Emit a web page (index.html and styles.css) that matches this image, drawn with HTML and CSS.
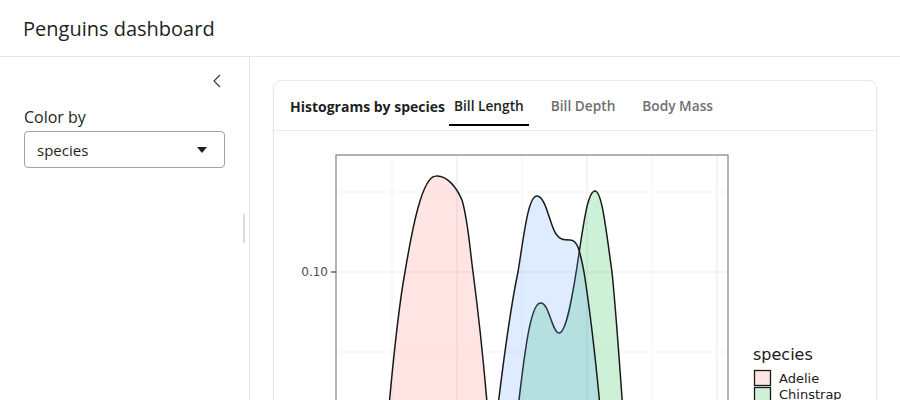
FILE: index.html
```html
<!DOCTYPE html>
<html lang="en">
<head>
    <meta charset="UTF-8">
    <meta name="viewport" content="width=device-width, initial-scale=1.0">
    <title>Penguins dashboard</title>
    <link rel="stylesheet" href="styles.css">
</head>
<body>
    <header class="page-header">
        <h1>Penguins dashboard</h1>
    </header>

    <div class="layout">
        <aside class="sidebar">
            <div class="sidebar-top">
                <button class="collapse-toggle" aria-label="Collapse sidebar">
                    <svg width="10" height="14" viewBox="0 0 10 14">
                        <path d="M8 1 L2 7 L8 13" fill="none" stroke="#333" stroke-width="1.1"/>
                    </svg>
                </button>
            </div>
            <label class="field-label" for="colorBy">Color by</label>
            <div class="select">
                <span>species</span>
                <span class="caret"></span>
            </div>
            <div class="resize-handle"></div>
        </aside>

        <main class="main">
            <section class="card">
                <div class="card-header">
                    <span class="card-title">Histograms by species</span>
                    <nav class="tabs">
                        <a class="tab active">Bill Length</a>
                        <a class="tab">Bill Depth</a>
                        <a class="tab">Body Mass</a>
                    </nav>
                </div>
                <div class="card-body">
                    <svg class="plot" width="570" height="300" viewBox="0 0 570 300">
                        <g transform="translate(-290 -147)">
                            <!-- grid -->
                            <g stroke="#f3f3f3" stroke-width="1">
                                <line x1="336" y1="192" x2="728" y2="192"/>
                                <line x1="336" y1="352" x2="728" y2="352"/>
                                <line x1="392" y1="155" x2="392" y2="460"/>
                                <line x1="522" y1="155" x2="522" y2="460"/>
                                <line x1="652" y1="155" x2="652" y2="460"/>
                            </g>
                            <g stroke="#ebebeb" stroke-width="1.2">
                                <line x1="336" y1="272" x2="728" y2="272"/>
                                <line x1="457" y1="155" x2="457" y2="460"/>
                                <line x1="587" y1="155" x2="587" y2="460"/>
                                <line x1="717" y1="155" x2="717" y2="460"/>
                            </g>

                            <!-- densities: Adelie, Chinstrap, Gentoo -->
                            <g stroke="#1a1a1a" stroke-width="1.5">
                                <path fill="#F8766D" fill-opacity="0.2"
                                      d="M386 440 C392 370, 398 310, 405 272 C412 230, 422 176, 436 176 C446 175, 456 186, 462 200 C468 220, 470 250, 473 272 C478 310, 484 360, 490 440"/>
                                <path fill="#00BA38" fill-opacity="0.2"
                                      d="M514 440 C522 380, 528 305, 540 303 C549 301, 552 333, 559 333 C566 333, 572 300, 578 260 C584 220, 588 191, 595 191 C602 191, 606 230, 612 272 C616 310, 620 370, 625 440"/>
                                <path fill="#619CFF" fill-opacity="0.2"
                                      d="M494 440 C502 370, 510 310, 518 272 C524 235, 528 196, 537 196 C546 196, 550 226, 556 234 C560 240, 564 240, 570 240 C578 240, 580 252, 584 272 C590 310, 597 370, 603 440"/>
                            </g>

                            <!-- panel border and y axis -->
                            <rect x="336" y="155" width="392" height="300" fill="none" stroke="#8c8c8c" stroke-width="1.3"/>
                            <line x1="331" y1="272" x2="336" y2="272" stroke="#333" stroke-width="1.1"/>
                            <text class="axis-text" x="328" y="276" text-anchor="end">0.10</text>

                            <!-- legend -->
                            <text class="legend-title" x="753" y="360">species</text>
                            <rect x="754.5" y="370.5" width="16" height="15" fill="#F8766D" fill-opacity="0.2" stroke="#1a1a1a" stroke-width="1.3"/>
                            <text class="legend-text" x="779" y="383">Adelie</text>
                            <rect x="754.5" y="387.5" width="16" height="15" fill="#00BA38" fill-opacity="0.2" stroke="#1a1a1a" stroke-width="1.3"/>
                            <text class="legend-text" x="779" y="399">Chinstrap</text>
                        </g>
                    </svg>
                </div>
            </section>
        </main>
    </div>
</body>
</html>
```

FILE: styles.css
```css
* {
    box-sizing: border-box;
}

body {
    margin: 0;
    background: #fff;
    color: #1d1f21;
    font-family: "Open Sans", "Liberation Sans", sans-serif;
    height: 100vh;
    overflow: hidden;
}

.page-header {
    height: 57px;
    padding: 0 23px;
    display: flex;
    align-items: center;
    border-bottom: 1px solid #e6e6e6;
}

.page-header h1 {
    margin: 0;
    font-size: 20px;
    font-weight: 400;
}

.layout {
    display: flex;
    height: calc(100vh - 57px);
}

/* sidebar */
.sidebar {
    position: relative;
    width: 250px;
    flex-shrink: 0;
    border-right: 1px solid #e6e6e6;
    padding: 0 24px;
}

.sidebar-top {
    display: flex;
    justify-content: flex-end;
    padding: 17px 3px 0 0;
    height: 48px;
}

.collapse-toggle {
    border: none;
    background: none;
    padding: 0;
    width: 10px;
    height: 14px;
    cursor: pointer;
}

.field-label {
    display: block;
    font-size: 16px;
    line-height: 24px;
    margin-bottom: 2px;
}

.select {
    width: 201px;
    height: 37px;
    border: 1px solid #a3a3a3;
    border-radius: 4px;
    padding: 0 17px 0 12px;
    display: flex;
    align-items: center;
    justify-content: space-between;
    font-size: 15px;
}

.caret {
    width: 0;
    height: 0;
    border-left: 5px solid transparent;
    border-right: 5px solid transparent;
    border-top: 6px solid #1d1f21;
}

.resize-handle {
    position: absolute;
    right: 4px;
    top: 157px;
    width: 2px;
    height: 29px;
    background: #dcdcdc;
}

/* main area */
.main {
    flex: 1;
    padding: 23px 23px 0 23px;
    overflow: hidden;
}

.card {
    border: 1px solid #e8e8e8;
    border-radius: 8px;
    box-shadow: 0 1px 3px rgba(0, 0, 0, 0.06);
    min-height: 500px;
    overflow: hidden;
}

.card-header {
    display: flex;
    align-items: center;
    padding: 6px 16px 4px;
    border-bottom: 1px solid #ebebeb;
}

.card-title {
    font-size: 14px;
    font-weight: 700;
    margin-right: 4px;
}

.tabs {
    display: flex;
    gap: 17px;
}

.tab {
    font-size: 13.7px;
    font-weight: 600;
    line-height: 21px;
    color: #707070;
    padding: 8px 5px;
    border-bottom: 2px solid transparent;
    cursor: pointer;
}

.tab.active {
    color: #1d1f21;
    border-bottom-color: #000;
}

.card-body {
    padding: 16px 16px 0;
}

.plot {
    display: block;
}

.axis-text {
    font-family: "DejaVu Sans", sans-serif;
    font-size: 12px;
    fill: #4d4d4d;
}

.legend-title {
    font-family: "DejaVu Sans", sans-serif;
    font-size: 16px;
    fill: #1a1a1a;
}

.legend-text {
    font-family: "DejaVu Sans", sans-serif;
    font-size: 13px;
    fill: #1a1a1a;
}
```
